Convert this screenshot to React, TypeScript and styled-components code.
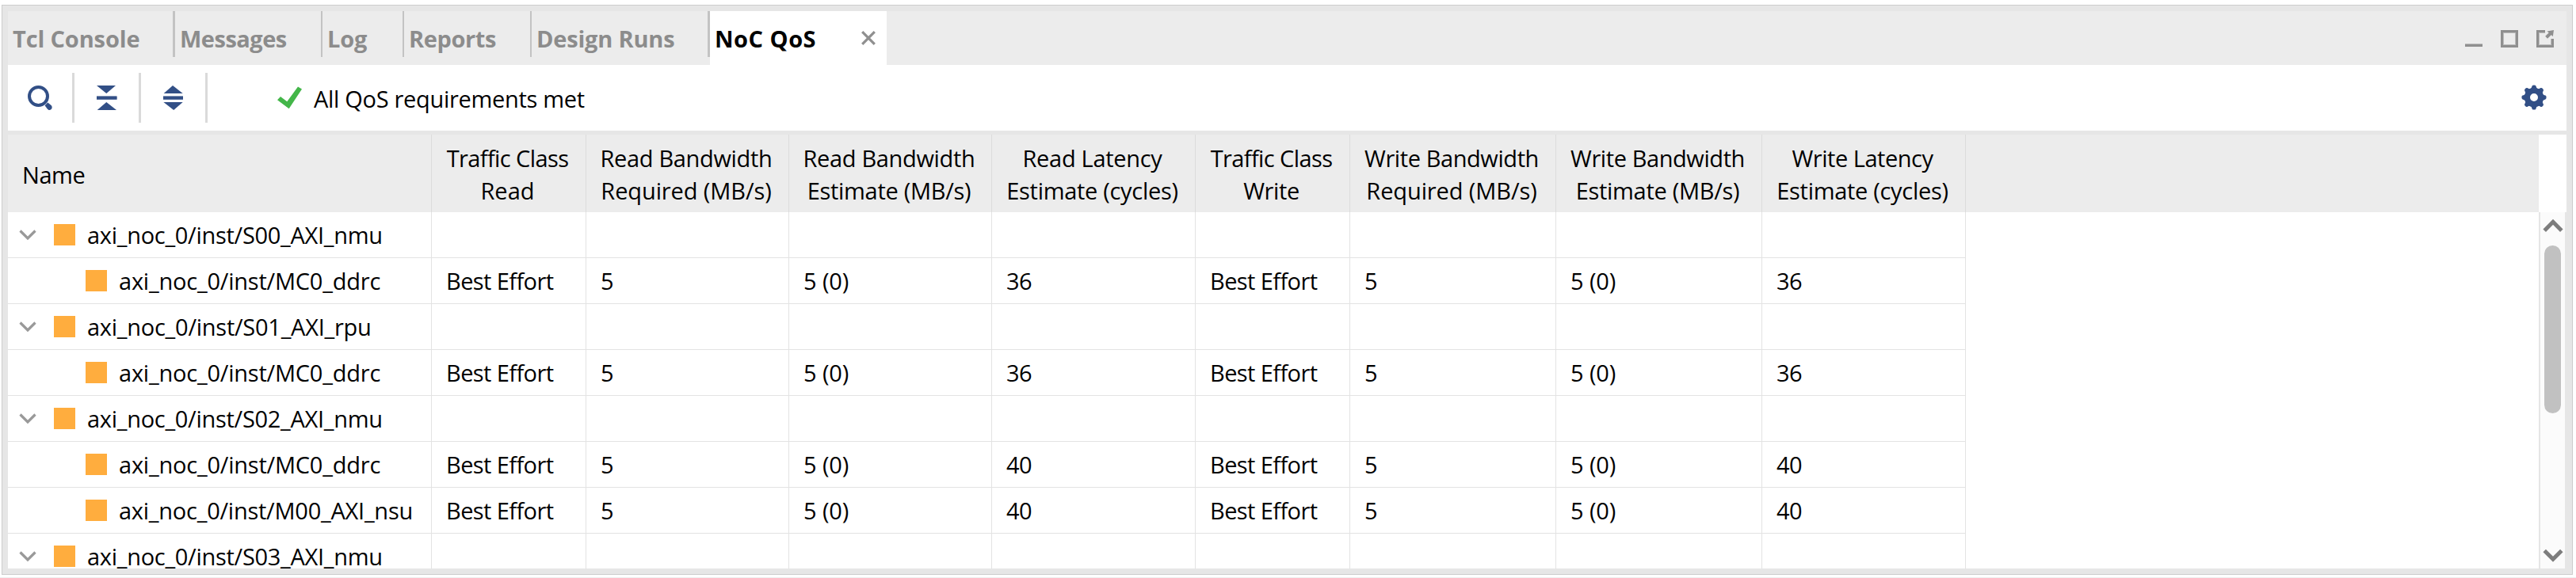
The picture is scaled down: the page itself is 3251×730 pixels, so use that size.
import React from 'react';
import styled, { createGlobalStyle } from 'styled-components';

const GlobalStyle = createGlobalStyle`
  * { box-sizing: border-box; }
  body { margin: 0; background: #fff; }
`;

const Page = styled.div`
  height: 730px;
  padding: 6px 4px 0 2px;
  border-bottom: 1px solid #efefef;
  font-family: 'Open Sans', 'Noto Sans', sans-serif;
  font-size: 29px;
  line-height: 41px;
  color: #000;
  white-space: nowrap;
  overflow: hidden;
`;

const Panel = styled.div`
  height: 720px;
  border: 1px solid #cccccc;
  background: #e6e6e6;
  padding: 7px 7px 7px 7px;
  display: flex;
  flex-direction: column;
`;

const TabBar = styled.div`
  height: 68px;
  flex: none;
  display: flex;
  background: #ececec;
`;

const Tab = styled.div<{ $w: number; $sep?: number; $pad?: number; $active?: boolean }>`
  width: ${p => p.$w}px;
  height: ${p => (p.$active ? 68 : 58)}px;
  padding: 14px 14px 0 ${p => p.$pad ?? 6}px;
  display: flex;
  justify-content: space-between;
  font-weight: 700;
  color: ${p => (p.$active ? '#000' : '#8c8c8c')};
  background: ${p => (p.$active ? '#fff' : 'transparent')};
  border-right: ${p => p.$sep ?? 0}px solid #c3c3c3;
`;

const CloseIcon = styled.svg`
  width: 18px;
  height: 18px;
  margin-top: 11px;
`;

const WindowButtons = styled.div`
  margin-left: auto;
  padding: 24px 16px 0 0;
  display: flex;
  gap: 23px;
`;

const ToolBar = styled.div`
  height: 83px;
  flex: none;
  display: flex;
  background: #fff;
  padding: 10px 25px 0 0;
`;

const ToolButton = styled.div<{ $w: number; $left: number }>`
  width: ${p => p.$w}px;
  height: 63px;
  padding: 16px 0 0 ${p => p.$left}px;
  border-right: 3px solid #dadada;
`;

const Status = styled.div`
  display: flex;
  gap: 14px;
  padding: 12px 0 0 88px;
`;

const CheckIcon = styled.svg`
  width: 32px;
  height: 29px;
  margin-top: 5px;
`;

const GearIcon = styled.svg`
  width: 32px;
  height: 32px;
  margin: 15px 0 0 auto;
`;

const Body = styled.div`
  margin-top: 5px;
  height: 548px;
  flex: none;
  display: flex;
  background: #fff;
`;

const Table = styled.div`
  width: 3194px;
  flex: none;
  overflow: hidden;
`;

const Grid = styled.div`
  display: grid;
  grid-template-columns: 535px 195px 256px 256px 257px 195px 260px 260px 257px 1fr;
`;

const HeaderRow = styled(Grid)`
  height: 98px;
  background: #ececec;
`;

const HeaderCell = styled.div`
  border-right: 1px solid #dcdcdc;
  padding: 9px 3px 0 0;
  text-align: center;
`;

const NameHeader = styled(HeaderCell)`
  padding: 30px 0 0 18px;
  text-align: left;
`;

const Row = styled(Grid)`
  height: 58px;
`;

const Cell = styled.div`
  border-right: 1px solid #e3e3e3;
  border-bottom: 1px solid #e3e3e3;
  padding: 8px 0 0 18px;
`;

const NameCell = styled(Cell)<{ $child?: boolean }>`
  display: flex;
  padding-left: ${p => (p.$child ? 98 : 14)}px;
`;

const Chevron = styled.svg`
  width: 22px;
  height: 14px;
  margin: 14px 22px 0 0;
`;

const Block = styled.span`
  width: 27px;
  height: 27px;
  margin: 7px 15px 0 0;
  background: #ffad3e;
`;

const Label = styled.span<{ $ls: number }>`
  letter-spacing: ${p => p.$ls}px;
`;

const HeaderLine = styled(Label)`
  display: block;
`;

const ScrollSide = styled.div`
  width: 35px;
  padding-top: 98px;
`;

const ScrollTrack = styled.div`
  height: 450px;
  background: #fbfbfb;
  border-left: 2px solid #e5e5e5;
  border-right: 2px solid #e6e6e6;
  padding: 8px 0 7px;
  display: flex;
  flex-direction: column;
  align-items: center;
`;

const ScrollThumb = styled.div`
  width: 21px;
  height: 212px;
  margin: 16px 0 auto;
  border-radius: 11px;
  background: #c1c1c1;
`;

const spacing: Record<string, number> = {
  'axi_noc_0/inst/S00_AXI_nmu': -0.29,
  'axi_noc_0/inst/S02_AXI_nmu': -0.29,
  'axi_noc_0/inst/S03_AXI_nmu': -0.29,
  'axi_noc_0/inst/S01_AXI_rpu': -0.26,
  'axi_noc_0/inst/MC0_ddrc': -0.22,
  'axi_noc_0/inst/M00_AXI_nsu': -0.25,
  'Best Effort': -0.6,
  '5 (0)': -0.1,
  '36': -0.7,
  '40': -0.7,
};

const Text = ({ children }: { children: string }) => (
  <Label $ls={spacing[children] ?? 0}>{children}</Label>
);

type HeaderText = [string, number];
const headers: [HeaderText, HeaderText][] = [
  [['Traffic Class', -0.6], ['Read', 0]],
  [['Read Bandwidth', -0.34], ['Required (MB/s)', -0.1]],
  [['Read Bandwidth', -0.34], ['Estimate (MB/s)', -0.29]],
  [['Read Latency', -0.31], ['Estimate (cycles)', -0.3]],
  [['Traffic Class', -0.6], ['Write', -0.37]],
  [['Write Bandwidth', -0.42], ['Required (MB/s)', -0.1]],
  [['Write Bandwidth', -0.42], ['Estimate (MB/s)', -0.29]],
  [['Write Latency', -0.48], ['Estimate (cycles)', -0.3]],
];

const rows: { name: string; latency?: string }[] = [
  { name: 'axi_noc_0/inst/S00_AXI_nmu' },
  { name: 'axi_noc_0/inst/MC0_ddrc', latency: '36' },
  { name: 'axi_noc_0/inst/S01_AXI_rpu' },
  { name: 'axi_noc_0/inst/MC0_ddrc', latency: '36' },
  { name: 'axi_noc_0/inst/S02_AXI_nmu' },
  { name: 'axi_noc_0/inst/MC0_ddrc', latency: '40' },
  { name: 'axi_noc_0/inst/M00_AXI_nsu', latency: '40' },
  { name: 'axi_noc_0/inst/S03_AXI_nmu' },
];

const ScrollArrow = ({ down }: { down?: boolean }) => (
  <svg width="26" height="18" viewBox="0 0 26 18">
    <path
      d={down ? 'M2.2 2.5 L13 13.2 L23.8 2.5' : 'M2.2 15.2 L13 4.2 L23.8 15.2'}
      fill="none"
      stroke="#7d7d7d"
      strokeWidth="5"
    />
  </svg>
);

const blue = '#324f86';

export default function App() {
  return (
    <Page>
      <GlobalStyle />
      <Panel>
        <TabBar>
          <Tab $w={211} $sep={3} $pad={6}><Label $ls={-0.14}>Tcl Console</Label></Tab>
          <Tab $w={186} $sep={2}><Label $ls={-0.5}>Messages</Label></Tab>
          <Tab $w={103} $sep={2}><Label $ls={-0.17}>Log</Label></Tab>
          <Tab $w={161} $sep={2}><Label $ls={-0.39}>Reports</Label></Tab>
          <Tab $w={225} $sep={3}><Label $ls={-0.19}>Design Runs</Label></Tab>
          <Tab $w={223} $active>
            <Label $ls={0.5}>NoC QoS</Label>
            <CloseIcon viewBox="0 0 18 18">
              <path d="M1.2 1.2 L16.8 16.8 M16.8 1.2 L1.2 16.8" stroke="#8f8f8f" strokeWidth="3.2" />
            </CloseIcon>
          </Tab>
          <WindowButtons>
            <svg width="22" height="22" viewBox="0 0 22 22">
              <path d="M0 17h22v1H0z" fill="#bcbcbc" />
              <path d="M0 18h22v3H0z" fill="#8f8f8f" />
            </svg>
            <svg width="22" height="22" viewBox="0 0 22 22" fill="none">
              <rect x="3.5" y="3.5" width="15" height="15" stroke="#bcbcbc" />
              <rect x="1.5" y="1.5" width="19" height="19" stroke="#8f8f8f" strokeWidth="3" />
            </svg>
            <svg width="22" height="22" viewBox="0 0 22 22">
              <path d="M11 3.5 H3.5 V18.5 H18.5 V11" fill="none" stroke="#bcbcbc" />
              <path d="M11 1.5 H1.5 V20.5 H20.5 V11" fill="none" stroke="#8f8f8f" strokeWidth="3" />
              <path d="M12.6 9.2 L18 4" stroke="#8f8f8f" strokeWidth="4" />
              <path d="M13.5 1.5 L22 0 L20.8 8 Z" fill="#8f8f8f" />
            </svg>
          </WindowButtons>
        </TabBar>

        <ToolBar>
          <ToolButton $w={84} $left={25}>
            <svg width="32" height="32" viewBox="0 0 32 32">
              <circle cx="13.5" cy="13.5" r="11.5" fill="none" stroke={blue} strokeWidth="4" />
              <path
                d="M21.6 25.2 L25.3 21.4 L29.6 25.1 C31.6 27.2 30.8 31 27.3 31 C26.2 31 25.5 30.2 24.7 29.4 Z"
                fill={blue}
              />
            </svg>
          </ToolButton>
          <ToolButton $w={84} $left={28}>
            <svg width="26" height="32" viewBox="0 0 26 32" fill={blue}>
              <path d="M0 0h24L12.3 10z" />
              <path d="M0 13h25.5v5H0z" opacity=".6" />
              <path d="M0 14h25.5v3.5H0z" />
              <path d="M.7 31h24.3L12.3 21z" />
            </svg>
          </ToolButton>
          <ToolButton $w={84} $left={28}>
            <svg width="26" height="32" viewBox="0 0 26 32" fill={blue}>
              <path d="M.7 10h24L12 0z" />
              <path d="M0 13h25v5H0z" opacity=".6" />
              <path d="M0 14h25v3.5H0z" />
              <path d="M.4 21h24.3L13.2 31z" />
            </svg>
          </ToolButton>
          <Status>
            <CheckIcon viewBox="0 0 32 29">
              <path d="M0 17.3 L4 13 L12.3 19.2 L26 .5 L31 3.5 L14.7 28.2 Z" fill="#43b649" />
            </CheckIcon>
            <Label $ls={-0.31}>All QoS requirements met</Label>
          </Status>
          <GearIcon viewBox="-16 -16 32 32">
            <circle r="8.6" fill="none" stroke={blue} strokeWidth="7.2" />
            {[0, 45, 90, 135, 180, 225, 270, 315].map(a => (
              <path
                key={a}
                transform={`rotate(${a})`}
                d="M-5.2 -10 C-3.2 -11.4 -3 -12.6 -2.4 -14.4 Q-1.9 -15.6 0 -15.6 Q1.9 -15.6 2.4 -14.4 C3 -12.6 3.2 -11.4 5.2 -10 Z"
                fill={blue}
              />
            ))}
          </GearIcon>
        </ToolBar>

        <Body>
          <Table>
            <HeaderRow>
              <NameHeader><Label $ls={-0.43}>Name</Label></NameHeader>
              {headers.map(([top, bottom], i) => (
                <HeaderCell key={i}>
                  <HeaderLine $ls={top[1]}>{top[0]}</HeaderLine>
                  <HeaderLine $ls={bottom[1]}>{bottom[0]}</HeaderLine>
                </HeaderCell>
              ))}
            </HeaderRow>
            {rows.map(({ name, latency }, i) => {
              const half = latency ? ['Best Effort', '5', '5 (0)', latency] : ['', '', '', ''];
              return (
                <Row key={i}>
                  <NameCell $child={!!latency}>
                    {!latency && (
                      <Chevron viewBox="0 0 22 14">
                        <path d="M1.5 1.5 L11 11 L20.5 1.5" fill="none" stroke="#999" strokeWidth="3.2" />
                      </Chevron>
                    )}
                    <Block />
                    <Text>{name}</Text>
                  </NameCell>
                  {[...half, ...half].map((v, j) => (
                    <Cell key={j}><Text>{v}</Text></Cell>
                  ))}
                </Row>
              );
            })}
          </Table>
          <ScrollSide>
            <ScrollTrack>
              <ScrollArrow />
              <ScrollThumb />
              <ScrollArrow down />
            </ScrollTrack>
          </ScrollSide>
        </Body>
      </Panel>
    </Page>
  );
}
